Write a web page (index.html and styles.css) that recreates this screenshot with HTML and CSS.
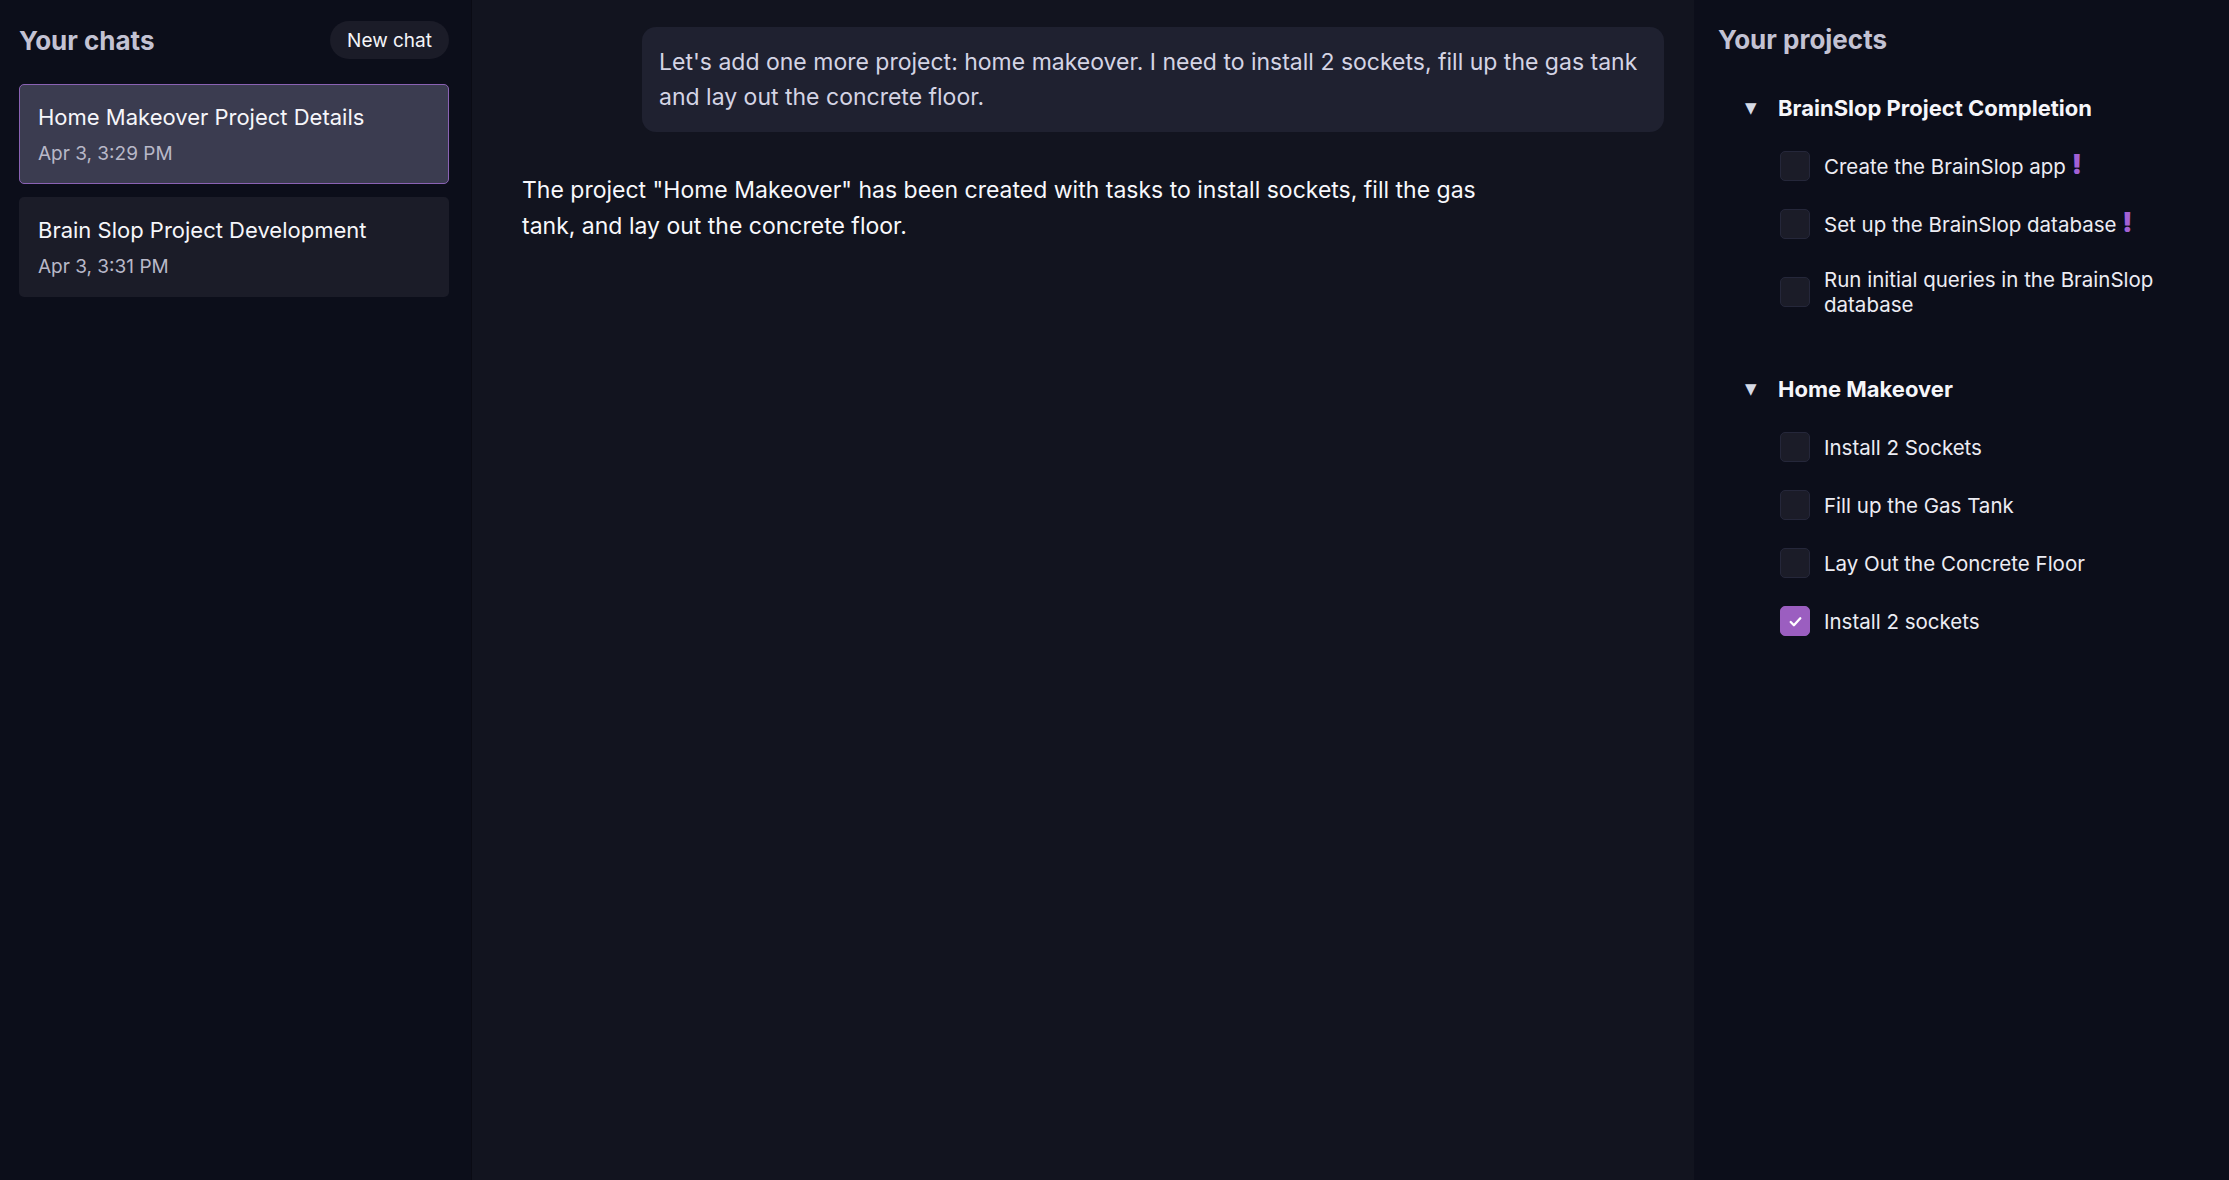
FILE: index.html
```html
<!DOCTYPE html>
<html lang="en">

<head>
    <meta charset="UTF-8">
    <meta name="viewport" content="width=device-width, initial-scale=1.0">
    <title>BrainSlop</title>
    <link rel="stylesheet" href="styles.css">
</head>

<body>
    <div class="app">
        <aside class="sidebar">
            <div class="sidebarHeader">
                <h2 class="panelTitle">Your chats</h2>
                <button class="newChat">New chat</button>
            </div>
            <ul class="chatList">
                <li class="chatItem active">
                    <div class="chatTitle">Home Makeover Project Details</div>
                    <div class="chatDate">Apr 3, 3:29 PM</div>
                </li>
                <li class="chatItem">
                    <div class="chatTitle">Brain Slop Project Development</div>
                    <div class="chatDate">Apr 3, 3:31 PM</div>
                </li>
            </ul>
        </aside>

        <main class="chat">
            <div class="message user">
                Let's add one more project: home makeover. I need to install 2 sockets, fill up the gas tank and lay out the concrete floor.
            </div>
            <div class="message assistant">
                The project "Home Makeover" has been created with tasks to install sockets, fill the gas tank, and lay out the concrete floor.
            </div>
        </main>

        <aside class="projects">
            <h2 class="panelTitle">Your projects</h2>

            <section class="project">
                <div class="projectHeader">
                    <span class="caret">&#9660;</span>
                    <span class="projectName">BrainSlop Project Completion</span>
                </div>
                <ul class="taskList">
                    <li class="task">
                        <span class="check"></span>
                        <span class="taskText">Create the BrainSlop app <b class="urgent">!</b></span>
                    </li>
                    <li class="task">
                        <span class="check"></span>
                        <span class="taskText">Set up the BrainSlop database <b class="urgent">!</b></span>
                    </li>
                    <li class="task">
                        <span class="check"></span>
                        <span class="taskText">Run initial queries in the BrainSlop database</span>
                    </li>
                </ul>
            </section>

            <section class="project">
                <div class="projectHeader">
                    <span class="caret">&#9660;</span>
                    <span class="projectName">Home Makeover</span>
                </div>
                <ul class="taskList">
                    <li class="task">
                        <span class="check"></span>
                        <span class="taskText">Install 2 Sockets</span>
                    </li>
                    <li class="task">
                        <span class="check"></span>
                        <span class="taskText">Fill up the Gas Tank</span>
                    </li>
                    <li class="task">
                        <span class="check"></span>
                        <span class="taskText">Lay Out the Concrete Floor</span>
                    </li>
                    <li class="task">
                        <span class="check checked">
                            <svg viewBox="0 0 16 16" width="17" height="17">
                                <path d="M3.5 8.5l3 3 6-6.5" fill="none" stroke="#fff" stroke-width="2.2" stroke-linecap="round" stroke-linejoin="round" />
                            </svg>
                        </span>
                        <span class="taskText">Install 2 sockets</span>
                    </li>
                </ul>
            </section>
        </aside>
    </div>
</body>

</html>
```

FILE: styles.css
```css
* {
    box-sizing: border-box;
}

body {
    margin: 0;
    background: #12141f;
    color: #f2f2f7;
    font-family: Inter, "Noto Sans", sans-serif;
}

ul {
    list-style: none;
    margin: 0;
    padding: 0;
}

.app {
    display: flex;
    height: 100vh;
}

.panelTitle {
    margin: 0;
    font-size: 26px;
    font-weight: 700;
    color: #c3c2d3;
}

/* left column */
.sidebar {
    width: 472px;
    flex-shrink: 0;
    background: #0c0e1a;
    border-right: 1px solid #0a0b14;
    padding: 21px 22px 0 19px;
}

.sidebarHeader {
    display: flex;
    justify-content: space-between;
    align-items: center;
    margin-bottom: 25px;
}

.newChat {
    height: 38px;
    padding: 0 17px;
    border: none;
    border-radius: 19px;
    background: #1b1c28;
    color: #f4f4f8;
    font-family: inherit;
    font-size: 19px;
}

.chatList {
    display: flex;
    flex-direction: column;
    gap: 13px;
}

.chatItem {
    height: 100px;
    padding: 17px 18px 0;
    border: 1px solid transparent;
    border-radius: 5px;
    background: #1b1c28;
}

.chatItem.active {
    background: #3b3c50;
    border-color: #8a62b4;
}

.chatTitle {
    font-size: 22px;
    line-height: 30px;
    color: #f6f6fa;
}

.chatDate {
    margin-top: 10px;
    font-size: 19px;
    color: #b8b8c8;
}

/* conversation */
.chat {
    flex: 1;
    display: flex;
    flex-direction: column;
    padding: 27px 30px;
}

.message {
    font-size: 23px;
}

.message.user {
    align-self: flex-end;
    max-width: 1022px;
    padding: 18px 17px 17px;
    border-radius: 14px;
    background: #1f2130;
    color: #d4d4e4;
    line-height: 35px;
}

.message.assistant {
    max-width: 985px;
    margin: 40px 0 0 20px;
    line-height: 36px;
    color: #f8f8fc;
}

/* right column */
.projects {
    width: 535px;
    flex-shrink: 0;
    background: #0c0e1a;
    padding: 24px 23px 0 24px;
}

.project {
    margin-top: 39px;
}

.project + .project {
    margin-top: 58px;
}

.projectHeader {
    display: flex;
    align-items: center;
    height: 27px;
    padding-left: 27px;
}

.caret {
    width: 33px;
    font-family: "DejaVu Sans", sans-serif;
    font-size: 15px;
    color: #d6dae6;
}

.projectName {
    font-size: 22px;
    font-weight: 700;
    color: #f6f6fa;
}

.taskList {
    display: flex;
    flex-direction: column;
    gap: 28px;
    margin-top: 30px;
    padding-left: 62px;
}

.task {
    display: flex;
    align-items: center;
    gap: 14px;
}

.check {
    display: flex;
    align-items: center;
    justify-content: center;
    width: 30px;
    height: 30px;
    flex-shrink: 0;
    border: 1px solid #25273a;
    border-radius: 5px;
    background: #1b1c28;
}

.check.checked {
    background: #9b5ec0;
    border-color: #9b5ec0;
}

.taskText {
    font-size: 20.5px;
    line-height: 25px;
    color: #ececf3;
}

.urgent {
    color: #a361d4;
    font-size: 27px;
    font-weight: 900;
    line-height: 0;
}
```
